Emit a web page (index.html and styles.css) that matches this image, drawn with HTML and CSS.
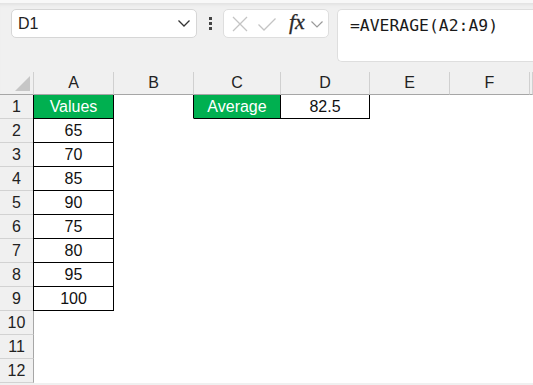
FILE: index.html
```html
<!DOCTYPE html>
<html lang="en">
  <head>
    <meta charset="UTF-8" />
    <title>AVERAGE</title>
    <link rel="stylesheet" href="styles.css">
  </head>
  <body>
    <div class="topbar">
      <div class="namebox">
        <span>D1</span>
        <svg class="chev" width="12" height="7" viewBox="0 0 12 7"><path d="M0.5 0.5 L6 6 L11.5 0.5" fill="none" stroke="#333" stroke-width="1.3"/></svg>
      </div>
      <div class="dots"><i></i><i></i><i></i></div>
      <div class="fxbox">
        <svg width="16" height="16" viewBox="0 0 16 16"><path d="M1 1 L15 15 M15 1 L1 15" stroke="#c4c4c4" stroke-width="1.3"/></svg>
        <svg width="18" height="13" viewBox="0 0 18 13"><path d="M0.5 6.5 L6 12 L17.5 0.5" fill="none" stroke="#c4c4c4" stroke-width="1.3"/></svg>
        <span class="fx">fx</span>
        <svg width="12" height="7" viewBox="0 0 12 7"><path d="M0.5 0.5 L6 6 L11.5 0.5" fill="none" stroke="#9a9a9a" stroke-width="1.2"/></svg>
      </div>
      <div class="formula">=AVERAGE(A2:A9)</div>
    </div>

    <div class="sheet">
      <div class="corner"><span class="tri"></span></div>
      <div class="colhead">A</div>
      <div class="colhead">B</div>
      <div class="colhead">C</div>
      <div class="colhead">D</div>
      <div class="colhead">E</div>
      <div class="colhead">F</div>
      <div class="colhead"></div>

      <div class="rowhead">1</div>
      <div class="cell b left green">Values</div>
      <div class="cell edge"></div>
      <div class="cell b green">Average</div>
      <div class="cell b">82.5</div>
      <div class="cell"></div><div class="cell"></div><div class="cell"></div>

      <div class="rowhead">2</div>
      <div class="cell b left">65</div>
      <div class="cell"></div><div class="cell"></div><div class="cell"></div><div class="cell"></div><div class="cell"></div><div class="cell"></div>

      <div class="rowhead">3</div>
      <div class="cell b left">70</div>
      <div class="cell"></div><div class="cell"></div><div class="cell"></div><div class="cell"></div><div class="cell"></div><div class="cell"></div>

      <div class="rowhead">4</div>
      <div class="cell b left">85</div>
      <div class="cell"></div><div class="cell"></div><div class="cell"></div><div class="cell"></div><div class="cell"></div><div class="cell"></div>

      <div class="rowhead">5</div>
      <div class="cell b left">90</div>
      <div class="cell"></div><div class="cell"></div><div class="cell"></div><div class="cell"></div><div class="cell"></div><div class="cell"></div>

      <div class="rowhead">6</div>
      <div class="cell b left">75</div>
      <div class="cell"></div><div class="cell"></div><div class="cell"></div><div class="cell"></div><div class="cell"></div><div class="cell"></div>

      <div class="rowhead">7</div>
      <div class="cell b left">80</div>
      <div class="cell"></div><div class="cell"></div><div class="cell"></div><div class="cell"></div><div class="cell"></div><div class="cell"></div>

      <div class="rowhead">8</div>
      <div class="cell b left">95</div>
      <div class="cell"></div><div class="cell"></div><div class="cell"></div><div class="cell"></div><div class="cell"></div><div class="cell"></div>

      <div class="rowhead">9</div>
      <div class="cell b left">100</div>
      <div class="cell"></div><div class="cell"></div><div class="cell"></div><div class="cell"></div><div class="cell"></div><div class="cell"></div>

      <div class="rowhead">10</div>
      <div class="cell"></div><div class="cell"></div><div class="cell"></div><div class="cell"></div><div class="cell"></div><div class="cell"></div><div class="cell"></div>

      <div class="rowhead">11</div>
      <div class="cell"></div><div class="cell"></div><div class="cell"></div><div class="cell"></div><div class="cell"></div><div class="cell"></div><div class="cell"></div>

      <div class="rowhead">12</div>
      <div class="cell"></div><div class="cell"></div><div class="cell"></div><div class="cell"></div><div class="cell"></div><div class="cell"></div><div class="cell"></div>
    </div>
  </body>
</html>
```

FILE: styles.css
```css
* {
  box-sizing: border-box;
}

html, body {
  margin: 0;
  height: 385px;
  overflow: hidden;
}

body {
  background-color: #f0f0f0;
  font-family: "Liberation Sans", Arial, sans-serif;
  font-size: 16px;
  color: #1f1f1f;
  border-top: 3px solid #f8f8f8;
  box-shadow: inset 0 4px 3px -2px #e2e2e2;
}

/* formula bar strip */
.topbar {
  display: flex;
  align-items: flex-start;
  padding: 6px 0 0 11px;
  height: 69px;
}

.namebox {
  width: 186px;
  height: 29px;
  background: white;
  border: 1px solid #d6d6d6;
  border-radius: 5px;
  display: flex;
  align-items: center;
  justify-content: space-between;
  padding: 0 6px 0 6px;
}

.namebox span {
  font-size: 16px;
  color: #222;
}

.dots {
  width: 26px;
  height: 29px;
  display: flex;
  flex-direction: column;
  align-items: center;
  justify-content: center;
  gap: 2px;
}

.dots i {
  display: block;
  width: 3px;
  height: 3px;
  background: #444;
}

.fxbox {
  width: 106px;
  height: 29px;
  background: white;
  border: 1px solid #dedede;
  border-radius: 5px;
  display: flex;
  align-items: center;
  padding-left: 8px;
}

.fxbox svg:nth-child(2) {
  margin-left: 10px;
  margin-top: 2px;
}

.fx {
  font-family: "Liberation Serif", "Times New Roman", serif;
  font-style: italic;
  font-size: 22px;
  color: #2a2a2a;
  margin-left: 13px;
  margin-top: -3px;
  -webkit-text-stroke: 0.3px #2a2a2a;
}

.fxbox svg:last-child {
  margin-left: 6px;
  margin-top: 1px;
}

.formula {
  flex: 1;
  margin-left: 8px;
  height: 53px;
  background: white;
  border: 1px solid #dedede;
  border-right: none;
  border-radius: 5px 0 0 5px;
  font-family: "DejaVu Sans Mono", monospace;
  font-size: 16.4px;
  color: #1a1a1a;
  padding: 6px 0 0 12px;
  white-space: nowrap;
  overflow: hidden;
}

/* grid */
.sheet {
  display: grid;
  grid-template-columns: 34px 80px 80px 87px 89px 80px 80px 3px;
  grid-template-rows: 23px repeat(12, 24px);
  overflow: hidden;
}

.corner {
  border-right: 1px solid #d0d0d0;
  border-bottom: 1px solid #a6a6a6;
  position: relative;
}

.tri {
  position: absolute;
  right: 3px;
  bottom: 3px;
  width: 0;
  height: 0;
  border-left: 15px solid transparent;
  border-bottom: 15px solid #c6c6c6;
}

.colhead {
  background: #f0f0f0;
  border-right: 1px solid #d0d0d0;
  border-bottom: 1px solid #a6a6a6;
  display: flex;
  align-items: center;
  justify-content: center;
  color: #222;
}

.rowhead {
  background: #f0f0f0;
  border-right: 1px solid #a6a6a6;
  border-bottom: 1px solid #d2d2d2;
  display: flex;
  align-items: center;
  justify-content: center;
  color: #222;
}

.cell {
  background: white;
  border-right: 1px solid white;
  border-bottom: 1px solid white;
  display: flex;
  align-items: center;
  justify-content: center;
  color: #111;
}

.cell.b {
  border-right-color: #000;
  border-bottom-color: #000;
}

.cell.left {
  box-shadow: -1px 0 0 #000;
}

.cell.edge {
  border-right-color: #000;
}

.cell.green {
  background: #00b050;
  color: white;
}
```
